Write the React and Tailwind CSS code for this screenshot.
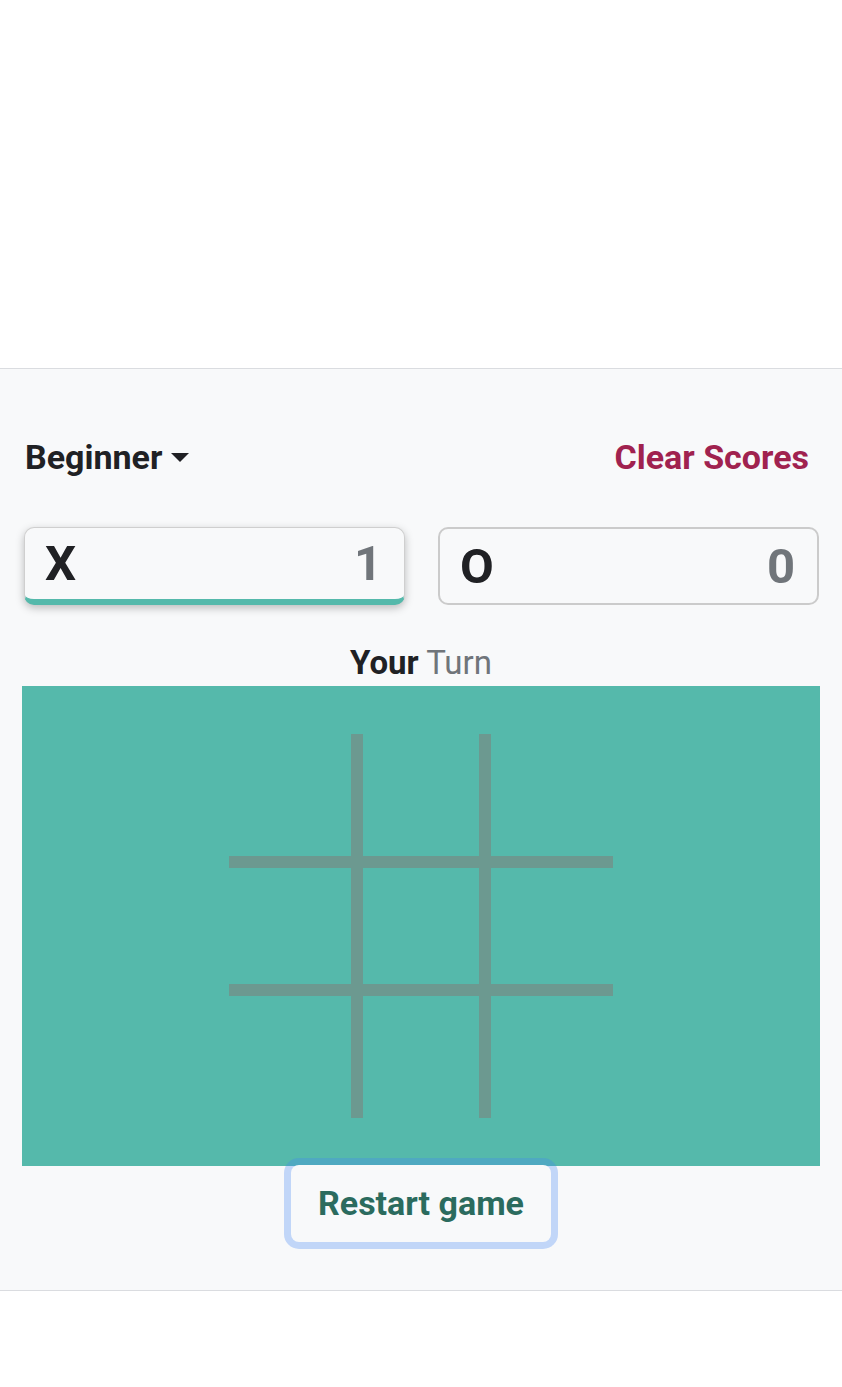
import React from 'react';

const font = { fontFamily: 'Roboto, "Liberation Sans", sans-serif' };

const ScoreBox = ({ mark, score, active }) => (
  <div
    className={
      active
        ? 'flex h-[78px] items-center justify-between rounded-[10px] border border-[#cfcfcf] border-b-[6px] border-b-[#55b9ab] bg-[#f8f9fa] pl-[20px] pr-[22px] shadow-[0_3px_8px_rgba(0,0,0,0.25)]'
        : 'flex h-[78px] items-center justify-between rounded-[10px] border-2 border-[#cbcbcb] bg-[#f8f9fa] pl-[20px] pr-[22px]'
    }
  >
    <span className="text-[49px] font-bold leading-none text-[#202124]">{mark}</span>
    <span className="text-[49px] font-bold leading-none text-[#70757a]">{score}</span>
  </div>
);

const Board = () => (
  <div className="flex h-[480px] items-center justify-center bg-[#55b9ab]">
    <svg width="384" height="384" viewBox="0 0 384 384">
      <g fill="#6c9990">
        <rect x="122" y="0" width="12" height="384" />
        <rect x="250" y="0" width="12" height="384" />
        <rect x="0" y="122" width="384" height="12" />
        <rect x="0" y="250" width="384" height="12" />
      </g>
    </svg>
  </div>
);

export default function App() {
  return (
    <div className="min-h-[1387px] bg-white" style={font}>
      <div className="h-[368px]" />
      <div className="border-y border-[#dadce0] bg-[#f8f9fa] px-[22px] pt-[68px] pb-[48px]">
        <div className="flex h-[40px] items-center justify-between pl-[3px] pr-[11px]">
          <button className="flex items-center gap-[9px] text-[34px] font-bold leading-[40px] text-[#202124]">
            Beginner
            <svg width="18" height="9" viewBox="0 0 18 9">
              <path d="M0 0h18L9 9z" fill="#202124" />
            </svg>
          </button>
          <button className="text-[34px] font-bold leading-[40px] text-[#a0224f]">Clear Scores</button>
        </div>
        <div className="mt-[50px] grid grid-cols-2 gap-[33px] pl-[2px] pr-px">
          <ScoreBox mark="X" score="1" active />
          <ScoreBox mark="O" score="0" />
        </div>
        <div className="mt-[38px] h-[40px] text-center text-[33px] leading-[40px]">
          <span className="font-bold text-[#202124]">Your</span>{' '}
          <span className="text-[#70757a]">Turn</span>
        </div>
        <div className="mt-[3px]">
          <Board />
        </div>
        <div className="flex justify-center">
          <button className="relative -mt-px h-[77px] w-[260px] rounded-[8px] bg-[#f8f9fa] text-[34px] font-bold text-[#2b6b5e] ring-[7px] ring-[#4285f4]/30">
            Restart game
          </button>
        </div>
      </div>
    </div>
  );
}
